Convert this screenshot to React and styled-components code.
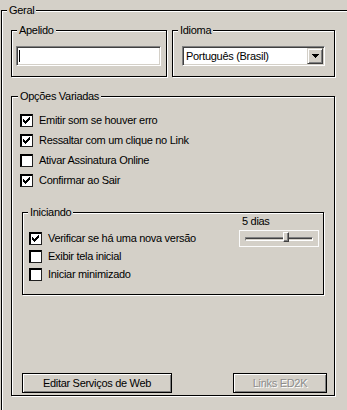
import React from "react";
import styled, { createGlobalStyle } from "styled-components";

const GlobalStyle = createGlobalStyle`
  html, body {
    margin: 0;
    padding: 0;
    background: #d4d0c8;
    overflow: hidden;
  }
  body {
    font-family: "Liberation Sans", Arial, sans-serif;
    font-size: 11px;
    line-height: 13px;
    letter-spacing: -0.3px;
    color: #000;
  }
`;

const Page = styled.div`
  width: 347px;
  height: 410px;
  padding-top: 4px;
  box-sizing: border-box;
  overflow: hidden;
`;

// etched group box, black line with a white line beside it
const Group = styled.fieldset`
  margin: 0;
  padding: 0;
  border: 1px solid #000;
  box-shadow: inset 1px 1px 0 #fff, 1px 1px 0 #fff;
  min-width: 0;
  box-sizing: border-box;
  width: ${(p) => p.$width || "auto"};
`;

const Caption = styled.legend`
  margin-left: ${(p) => p.$offset || 5}px;
  padding: 0 2px;
  background: #d4d0c8;
  line-height: 13px;
`;

const GeneralBody = styled.div`
  padding: 7px 0 0 9px;
  width: 324px;
  height: 420px;
`;

const TopRow = styled.div`
  display: flex;
  gap: 5px;
`;

const FieldBody = styled.div`
  padding: ${(p) => p.$pad};
`;

const TextBox = styled.div`
  width: 145px;
  height: 20px;
  box-sizing: border-box;
  background: #fff;
  border-top: 1px solid #808080;
  border-left: 1px solid #808080;
  border-bottom: 1px solid #fff;
  border-right: 1px solid #fff;
  box-shadow: inset 1px 1px 0 #404040, inset -1px -1px 0 #d4d0c8;
  display: flex;
  align-items: center;
  padding-left: 2px;
`;

const Caret = styled.span`
  width: 1px;
  height: 12px;
  background: #000;
`;

const Select = styled.div`
  width: 143px;
  height: 20px;
  box-sizing: border-box;
  background: #fff;
  border-top: 1px solid #808080;
  border-left: 1px solid #808080;
  border-bottom: 1px solid #fff;
  border-right: 1px solid #fff;
  box-shadow: inset 1px 1px 0 #404040, inset -1px -1px 0 #d4d0c8;
  display: flex;
  align-items: center;
  padding: 2px 1px 2px 3px;
`;

const SelectValue = styled.span`
  flex: 1;
`;

const ArrowButton = styled.span`
  width: 16px;
  height: 16px;
  box-sizing: border-box;
  background: #d4d0c8;
  border-top: 1px solid #d4d0c8;
  border-left: 1px solid #d4d0c8;
  border-bottom: 1px solid #404040;
  border-right: 1px solid #404040;
  box-shadow: inset 1px 1px 0 #fff, inset -1px -1px 0 #808080;
  display: flex;
  align-items: center;
  justify-content: center;
`;

const OptionsBody = styled.div`
  height: 292px;
  box-sizing: border-box;
  padding: 7px 7px 2px 8px;
  display: flex;
  flex-direction: column;
`;

const CheckRow = styled.div`
  display: flex;
  align-items: center;
  gap: 6px;
  height: ${(p) => p.$h}px;
`;

const Box = styled.span`
  width: 13px;
  height: 13px;
  box-sizing: border-box;
  background: #fff;
  border: 1px solid #000;
  border-bottom-color: #202020;
  border-right-color: #202020;
  box-shadow: inset 1px 1px 0 #000;
  flex-shrink: 0;
  position: relative;
`;

const Tick = styled.svg`
  position: absolute;
  left: -1px;
  top: -1px;
`;

const StartGroupWrap = styled.div`
  margin: 16px 0 0 2px;
  width: 302px;
`;

const StartBody = styled.div`
  display: flex;
  padding: 10px 4px 11px 6px;
`;

const StartList = styled.div`
  display: flex;
  flex-direction: column;
`;

const SliderArea = styled.div`
  margin: -14px 0 0 auto;
  display: flex;
  flex-direction: column;
  gap: 2px;
  width: 80px;
`;

const SliderLabel = styled.span`
  padding-left: 3px;
`;

const SliderBox = styled.div`
  height: 17px;
  box-sizing: border-box;
  border: 1px solid #fbfbfb;
  position: relative;
  display: flex;
  align-items: center;
  padding: 0 5px;
`;

const Track = styled.div`
  flex: 1;
  height: 4px;
  box-sizing: border-box;
  border-top: 1px solid #808080;
  border-left: 1px solid #808080;
  border-bottom: 1px solid #fff;
  border-right: 1px solid #fff;
  box-shadow: inset 0 1px 0 #404040;
`;

const Thumb = styled.div`
  position: absolute;
  left: 43px;
  top: 1px;
  width: 6px;
  height: 10px;
  box-sizing: border-box;
  background: #d4d0c8;
  border-top: 1px solid #fff;
  border-left: 1px solid #fff;
  border-bottom: 1px solid #404040;
  border-right: 1px solid #404040;
  box-shadow: inset -1px -1px 0 #808080;
`;

const ButtonRow = styled.div`
  margin-top: auto;
  display: flex;
  justify-content: space-between;
  padding-left: 2px;
`;

const Button = styled.button`
  width: ${(p) => p.$w}px;
  height: 20px;
  box-sizing: border-box;
  border: 1px solid #000;
  background: #d4d0c8;
  box-shadow: inset 1px 1px 0 #fff, inset -1px -1px 0 #808080;
  font: inherit;
  letter-spacing: inherit;
  color: ${(p) => (p.disabled ? "#8d8d8d" : "#000")};
  text-shadow: ${(p) => (p.disabled ? "1px 1px 0 #fff" : "none")};
  padding: 0;
`;

const Check = ({ checked, label, h }) => (
  <CheckRow $h={h}>
    <Box>
      {checked && (
        <Tick width="13" height="13" viewBox="0 0 13 13" shapeRendering="crispEdges">
          <path
            d="M3 5h1v3H3z M4 6h1v3H4z M5 7h1v3H5z M6 6h1v3H6z M7 5h1v3H7z M8 4h1v3H8z M9 3h1v3H9z"
            fill="#000"
          />
        </Tick>
      )}
    </Box>
    <span>{label}</span>
  </CheckRow>
);

const App = () => (
  <Page>
    <GlobalStyle />
    <Group $width="400px" style={{ marginLeft: 1 }}>
      <Caption $offset={5}>Geral</Caption>
      <GeneralBody>
        <TopRow>
          <Group $width="156px">
            <Caption $offset={5}>Apelido</Caption>
            <FieldBody $pad="9px 4px 10px 4px">
              <TextBox>
                <Caret />
              </TextBox>
            </FieldBody>
          </Group>
          <Group $width="163px">
            <Caption $offset={5}>Idioma</Caption>
            <FieldBody $pad="9px 4px 10px 9px">
              <Select>
                <SelectValue>Português (Brasil)</SelectValue>
                <ArrowButton>
                  <svg width="7" height="4" viewBox="0 0 7 4" shapeRendering="crispEdges">
                    <path d="M0 0h7v1H0z M1 1h5v1H1z M2 2h3v1H2z M3 3h1v1H3z" fill="#000" />
                  </svg>
                </ArrowButton>
              </Select>
            </FieldBody>
          </Group>
        </TopRow>
        <Group style={{ marginTop: 13 }}>
          <Caption $offset={6}>Opções Variadas</Caption>
          <OptionsBody>
            <Check h={20} checked label="Emitir som se houver erro" />
            <Check h={20} checked label="Ressaltar com um clique no Link" />
            <Check h={20} label="Ativar Assinatura Online" />
            <Check h={20} checked label="Confirmar ao Sair" />
            <StartGroupWrap>
              <Group>
                <Caption $offset={5}>Iniciando</Caption>
                <StartBody>
                  <StartList>
                    <Check h={18} checked label="Verificar se há uma nova versão" />
                    <Check h={18} label="Exibir tela inicial" />
                    <Check h={18} label="Iniciar minimizado" />
                  </StartList>
                  <SliderArea>
                    <SliderLabel>5 dias</SliderLabel>
                    <SliderBox>
                      <Track />
                      <Thumb />
                    </SliderBox>
                  </SliderArea>
                </StartBody>
              </Group>
            </StartGroupWrap>
            <ButtonRow>
              <Button $w={150}>Editar Serviços de Web</Button>
              <Button $w={94} disabled>
                Links ED2K
              </Button>
            </ButtonRow>
          </OptionsBody>
        </Group>
      </GeneralBody>
    </Group>
  </Page>
);

export default App;
